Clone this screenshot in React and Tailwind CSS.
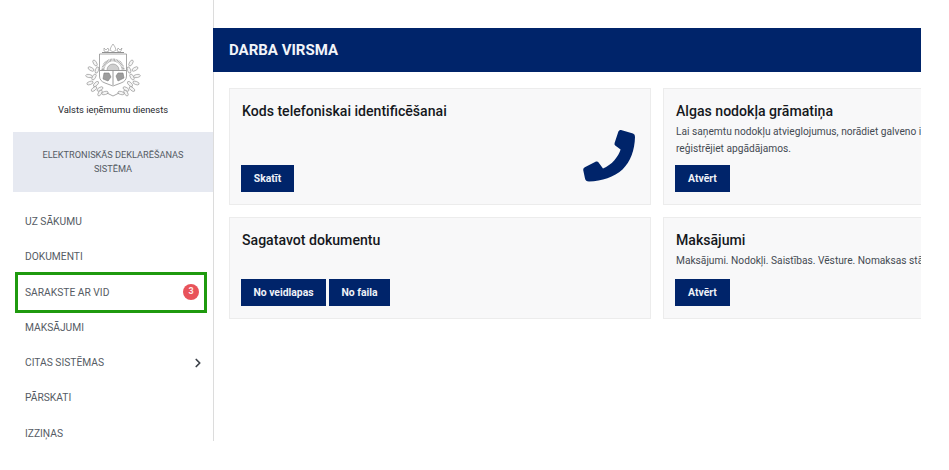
import { ChevronRight } from 'lucide-react';

const MENU = ['UZ SĀKUMU', 'DOKUMENTI', 'SARAKSTE AR VID', 'MAKSĀJUMI', 'CITAS SISTĒMAS', 'PĀRSKATI', 'IZZIŅAS'];

// oak leaves of the left half of the wreath: x, y, rotation
const LEAVES = [
  [10, 20, -30], [6, 26, -60], [12, 27, 20], [4, 33, -80], [9, 34, 30], [5, 40, -110],
  [11, 41, 45], [9, 46, -130], [15, 46, 60], [15, 50, -150], [20, 50, 75],
];

function Crest() {
  return (
    <svg width="56" height="56" viewBox="0 0 56 56" fill="none" stroke="#8f8f8f" strokeWidth="0.6">
      {/* crown of stars */}
      <path d="M19 5 L21 7 L23 5 L24 8 L21 9 L19 8 Z M26 4 L28 1 L30 4 L31 7 L28 9 L25 7 Z M33 5 L35 7 L37 5 L36 8 L35 9 L32 8 Z" />
      <path d="M17 9.5 H39" strokeWidth="1" />
      {/* shield */}
      <path d="M14.5 11 H41.5 V33 Q41.5 38 36 40 L28 43 L20 40 Q14.5 38 14.5 33 Z" strokeWidth="0.8" />
      <path d="M18 27 A10 10 0 0 1 38 27" strokeWidth="3" strokeDasharray="0.8 0.6" stroke="#a0a0a0" />
      <path d="M22 27 A6 6 0 0 1 34 27" fill="#cfcfcf" />
      <path d="M15 27.5 H41 M28 27.5 V42" strokeWidth="0.9" />
      <path d="M18 36 L19 30 L24 30 L26 34 L23 38 Z M31 33 L33 30 L38 30 L39 35 L33 38 Z" fill="#9d9d9d" stroke="#7d7d7d" />
      {/* oak wreath */}
      {LEAVES.map(([x, y, r]) => (
        <g key={`${x}-${y}`}>
          <ellipse cx={x} cy={y} rx="1.6" ry="3.3" transform={`rotate(${r} ${x} ${y})`} fill="#f4f4f4" />
          <ellipse cx={56 - x} cy={y} rx="1.6" ry="3.3" transform={`rotate(${-r} ${56 - x} ${y})`} fill="#f4f4f4" />
        </g>
      ))}
      <path d="M22 50 L28 53 L34 50" strokeWidth="0.8" />
    </svg>
  );
}

function Phone() {
  return (
    <svg width="75" height="70" viewBox="0 0 75 70" fill="#00246a" className="shrink-0">
      <path d="M51 10 L63 13.5 Q65.2 14.2 65 17 C64.7 30 60.5 41.5 52.5 49.5 C44 57 32 61 19 61.5 Q15.5 61.5 15 58.5 L13.2 50 Q12.9 48.2 14.8 47.2 L26 41.6 Q27.5 41 28.4 42.2 L33 48.4 C37.3 46.6 41 44 44.4 40.2 C47.4 36.8 49.4 33.3 50.6 29.6 L45.2 25.4 Q44.1 24.6 44.6 23 L48.4 11.4 Q49.2 9.5 51 10 Z" />
    </svg>
  );
}

function Button({ children, className = '' }) {
  return (
    <button className={`h-[27px] bg-[#00246a] text-[10.4px] font-bold text-[#eef1f7] ${className}`}>
      {children}
    </button>
  );
}

function Card({ title, text, className = '', children }) {
  return (
    <div className={`relative flex w-[422px] shrink-0 flex-col justify-between border border-[#ececec] bg-[#f8f8f9] pl-[11px] pr-3 pt-[12px] pb-3 ${className}`}>
      <div className="pl-[1px]">
        <h3 className="text-[14.1px] leading-[20px] font-medium text-[#16181d]">{title}</h3>
        {text && <p className="mt-[2px] text-[10.2px] leading-[17px] text-[#444a52]">{text}</p>}
      </div>
      <div className="flex gap-[3px]">{children}</div>
    </div>
  );
}

export default function App() {
  return (
    <div className="h-[470px] w-[949px] overflow-hidden bg-white font-['Roboto',sans-serif]">
      <div className="flex h-[441px] w-[921px] overflow-hidden">
        {/* Sidebar */}
        <aside className="w-[213px] shrink-0 shadow-[1px_0_0_#dcdcdc] pl-[13px]">
          <div className="flex h-[132px] flex-col items-center pt-[43px]">
            <Crest />
            <p className="mt-[4px] text-[9.4px] leading-[14px] text-[#25282c]">Valsts ieņēmumu dienests</p>
          </div>
          <div className="flex h-[60px] items-center justify-center bg-[#e6e9f1] px-6 text-center text-[9.2px] leading-[14px] text-[#555b64]">
            ELEKTRONISKĀS DEKLARĒŠANAS SISTĒMA
          </div>
          <nav className="mt-[12px] pr-[6px]">
            {MENU.map((item) => (
              <div key={item} className="relative flex h-[35.3px] items-center justify-between pl-3 pr-[2px] text-[10.25px] text-[#555b64]">
                <span>{item}</span>
                {item === 'CITAS SISTĒMAS' && <ChevronRight size={14} strokeWidth={3} className="text-[#3c4149]" />}
                {item === 'SARAKSTE AR VID' && (
                  <>
                    <span className="mr-[6px] flex h-4 w-4 items-center justify-center rounded-full bg-[#e8535a] text-[9px] font-bold text-[#ffe9e9]">3</span>
                    <div className="absolute -top-[3px] left-[2px] right-0 h-[41px] border-[3px] border-[#1f9a0e]" />
                  </>
                )}
              </div>
            ))}
          </nav>
        </aside>

        {/* Main */}
        <main className="min-w-0 flex-1 overflow-hidden pt-[28px]">
          <div className="flex h-[44px] items-center bg-[#00246a] pl-[16px] text-[15px] font-bold text-[#f2f4f9]">DARBA VIRSMA</div>
          <div className="mt-[16px] flex flex-col gap-3 pl-[16px]">
            <div className="flex gap-3">
              <Card title="Kods telefoniskai identificēšanai" className="h-[117px]">
                <Button className="w-[53px]">Skatīt</Button>
                <div className="absolute right-[5px] top-[31px]"><Phone /></div>
              </Card>
              <Card
                title="Algas nodokļa grāmatiņa"
                text="Lai saņemtu nodokļu atvieglojumus, norādiet galveno ienākumu gūšanas vietu un reģistrējiet apgādājamos."
                className="h-[117px]"
              >
                <Button className="w-[55px]">Atvērt</Button>
              </Card>
            </div>
            <div className="flex gap-3">
              <Card title="Sagatavot dokumentu" className="h-[102px]">
                <Button className="w-[85px]">No veidlapas</Button>
                <Button className="w-[61px]">No faila</Button>
              </Card>
              <Card
                title="Maksājumi"
                text="Maksājumi. Nodokļi. Saistības. Vēsture. Nomaksas stāvoklis."
                className="h-[102px]"
              >
                <Button className="w-[55px]">Atvērt</Button>
              </Card>
            </div>
          </div>
        </main>
      </div>
    </div>
  );
}
